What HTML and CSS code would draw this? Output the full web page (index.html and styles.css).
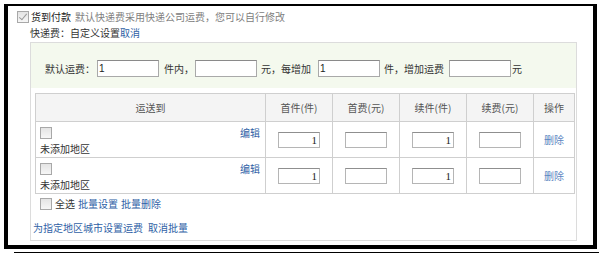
FILE: index.html
```html
<!DOCTYPE html>
<html lang="zh">
<head>
<meta charset="utf-8">
<link rel="stylesheet" href="styles.css">
</head>
<body>
<div class="page">
  <div class="frame">
    <div class="line1">
      <span class="cb cb-checked"></span>
      <span class="strong">货到付款</span>
      <span class="muted">默认快递费采用快递公司运费，您可以自行修改</span>
    </div>
    <div class="line2">快递费：自定义设置<a class="link">取消</a></div>
    <div class="box">
      <div class="defaults">
        <span class="d-lbl0">默认运费：</span><span class="inp">1</span>
        <span class="d-lbl1">件内，</span><span class="inp"></span>
        <span class="d-lbl2">元，每增加</span><span class="inp">1</span>
        <span class="d-lbl3">件，增加运费</span><span class="inp"></span>
        <span class="d-lbl4">元</span>
      </div>
      <table class="grid">
        <thead>
          <tr>
            <th class="c-to">运送到</th>
            <th class="c-n">首件(件)</th>
            <th class="c-n">首费(元)</th>
            <th class="c-n">续件(件)</th>
            <th class="c-n">续费(元)</th>
            <th class="c-op">操作</th>
          </tr>
        </thead>
        <tbody>
          <tr>
            <td class="area">
              <div class="area-top"><span class="cb"></span><a class="link">编辑</a></div>
              <div class="area-name">未添加地区</div>
            </td>
            <td><span class="cell-inp">1</span></td>
            <td><span class="cell-inp"></span></td>
            <td><span class="cell-inp">1</span></td>
            <td><span class="cell-inp"></span></td>
            <td><a class="link light">删除</a></td>
          </tr>
          <tr>
            <td class="area">
              <div class="area-top"><span class="cb"></span><a class="link">编辑</a></div>
              <div class="area-name">未添加地区</div>
            </td>
            <td><span class="cell-inp">1</span></td>
            <td><span class="cell-inp"></span></td>
            <td><span class="cell-inp">1</span></td>
            <td><span class="cell-inp"></span></td>
            <td><a class="link light">删除</a></td>
          </tr>
        </tbody>
      </table>
      <div class="batch">
        <span class="cb"></span><span>全选</span><a class="link">批量设置</a><a class="link">批量删除</a>
      </div>
      <div class="foot">
        <a class="link">为指定地区城市设置运费</a><a class="link">取消批量</a>
      </div>
    </div>
  </div>
</div>
</body>
</html>
```

FILE: styles.css
```css
html, body {
  margin: 0;
  padding: 0;
  background: #ffffff;
}
body {
  font-family: "Noto Sans CJK SC", "Liberation Sans", sans-serif;
  font-size: 10px;
  line-height: 16px;
  color: #333333;
}
.page {
  width: 600px;
  height: 254px;
  padding-top: 4px;
  padding-left: 4px;
  box-sizing: border-box;
  background: #ffffff;
}
.frame {
  width: 585px;
  height: 239px;
  border-style: solid;
  border-color: #000000;
  border-width: 2px 4px 4px 4px;
  background: #ffffff;
  padding: 0;
  box-sizing: content-box;
  box-shadow: 6px 7px 0 -4px #ffffff, 6px 8px 0 -4px #000000;
}
.line1 {
  display: flex;
  align-items: center;
  height: 16px;
  margin-top: 3px;
  padding-left: 9px;
  white-space: nowrap;
}
.line1 .strong {
  color: #222222;
  margin-left: 2px;
  margin-right: 4px;
}
.muted {
  color: #808080;
}
.line2 {
  height: 16px;
  padding-left: 22px;
  white-space: nowrap;
  color: #333333;
}
.link {
  color: #2f5fa6;
  text-decoration: none;
  cursor: pointer;
}
.link.light {
  color: #5b86c2;
}
.cb {
  display: inline-block;
  width: 10px;
  height: 10px;
  border: 1px solid #a8a8a8;
  background: linear-gradient(#e4e4e4, #f6f6f6);
  box-sizing: content-box;
  vertical-align: middle;
  position: relative;
}
.cb-checked::after {
  content: "";
  position: absolute;
  left: 3px;
  top: 0px;
  width: 3px;
  height: 7px;
  border: solid #9a9a9a;
  border-width: 0 1px 1px 0;
  transform: rotate(40deg);
}
.box {
  margin: 1px 0 0 22px;
  width: 545px;
  height: 197px;
  border: 1px solid #dcdcdc;
  background: #ffffff;
}
.defaults {
  display: flex;
  align-items: center;
  height: 17px;
  padding: 17px 0 11px 14px;
  background: #f4f9ee;
  white-space: nowrap;
}
.inp {
  display: inline-block;
  width: 59px;
  height: 15px;
  line-height: 15px;
  border: 1px solid #a9a9a9;
  border-top-color: #8a8a8a;
  background: #ffffff;
  padding-left: 1px;
  font-family: "Liberation Sans", sans-serif;
  font-size: 10px;
  color: #222222;
  box-sizing: content-box;
}
.d-lbl0 { margin-right: 2px; }
.d-lbl1 { margin-left: 5px; margin-right: 1px; }
.d-lbl2 { margin-left: 4px; margin-right: 7px; }
.d-lbl3 { margin-left: 4px; margin-right: 5px; }
.d-lbl4 { margin-left: 1px; }
.grid {
  margin: 5px 0 0 4px;
  width: 538px;
  border-collapse: collapse;
  table-layout: fixed;
}
.grid th, .grid td {
  border: 1px solid #cfcfcf;
  padding: 0;
  text-align: center;
  font-weight: normal;
}
.grid th {
  height: 27px;
  background: #f4f4f4;
  color: #555555;
}
.c-to { width: 229px; }
.c-n { width: 66px; }
.c-op { width: 40px; }
.grid td {
  height: 33px;
}
.grid td.area {
  text-align: left;
  vertical-align: top;
  padding: 5px 5px 0 4px;
  height: 28px;
}
.area-top {
  display: flex;
  justify-content: space-between;
  align-items: flex-start;
  height: 14px;
}
.area-top .link {
  margin-top: -2px;
}
.area-name {
  height: 16px;
  line-height: 16px;
  color: #333333;
}
.cell-inp {
  display: inline-block;
  width: 38px;
  height: 14px;
  line-height: 14px;
  border: 1px solid #b5b5b5;
  border-top-color: #8f8f8f;
  text-align: right;
  padding-right: 2px;
  vertical-align: middle;
  font-family: "Liberation Serif", serif;
  font-size: 11px;
  color: #222222;
  box-sizing: content-box;
}
.batch {
  display: flex;
  align-items: center;
  height: 16px;
  margin-top: 2px;
  padding-left: 9px;
  white-space: nowrap;
}
.batch .cb {
  margin-right: 3px;
}
.batch .link {
  margin-left: 3px;
}
.foot {
  height: 16px;
  margin-top: 8px;
  padding-left: 2px;
  white-space: nowrap;
}
.foot .link + .link {
  margin-left: 5px;
}
```
